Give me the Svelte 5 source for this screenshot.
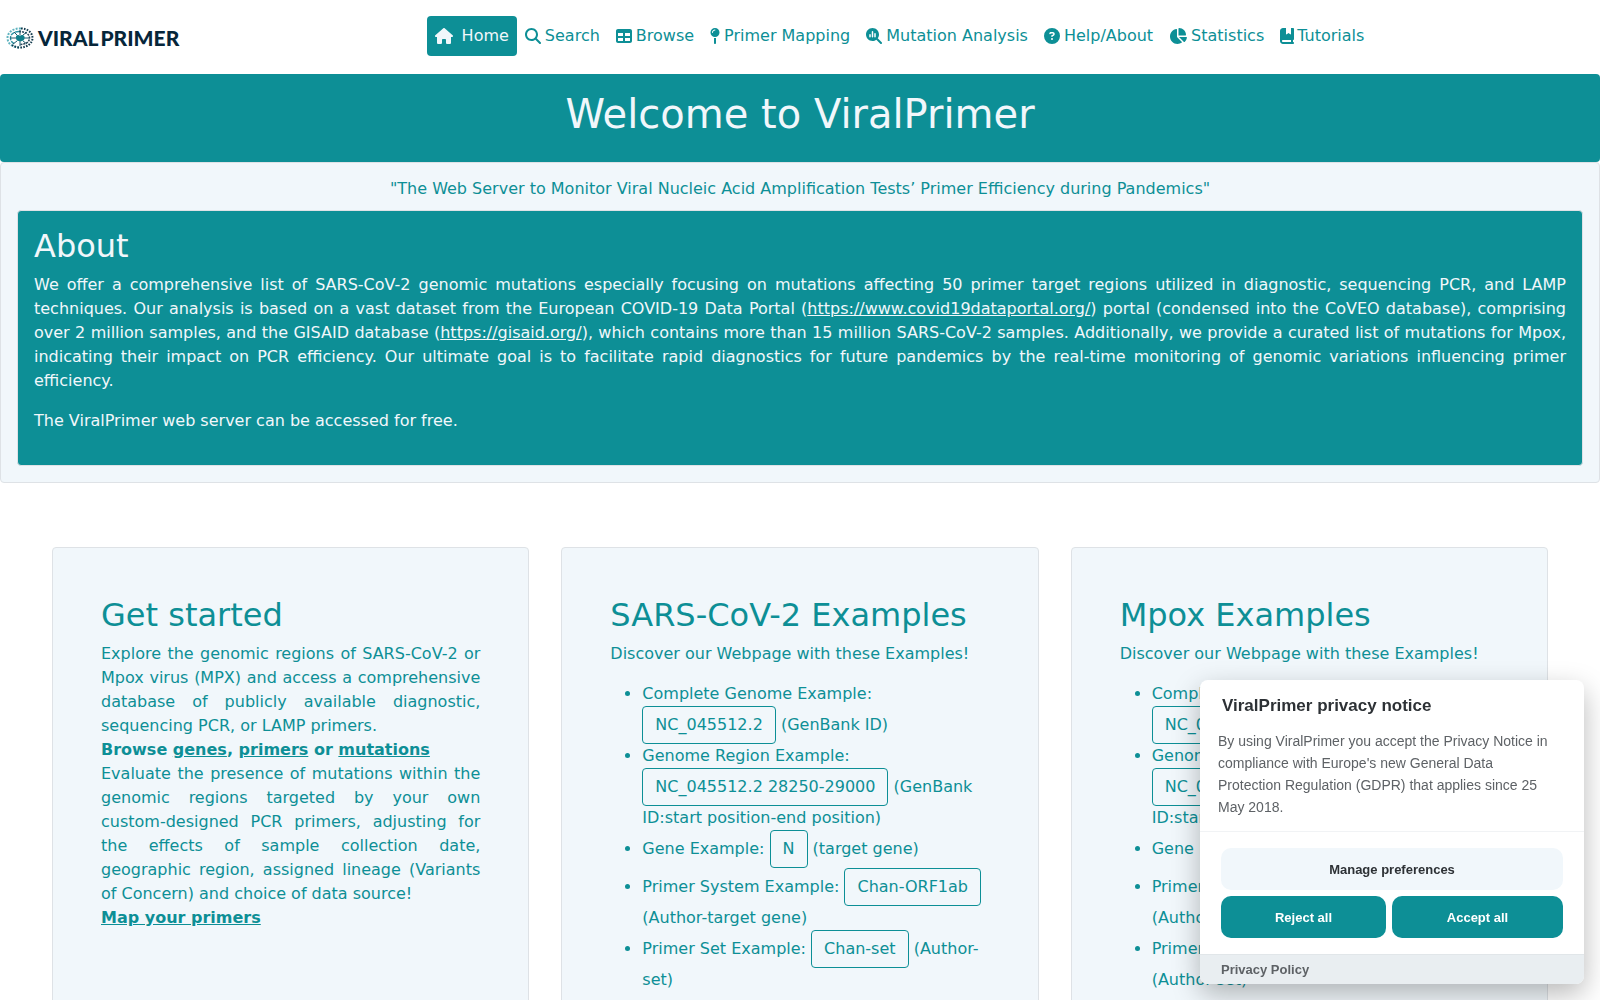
<script>
  const house = 'M575.8 255.5c0 18-15 32.1-32 32.1h-32l.7 160.2c0 2.7-.2 5.4-.5 8.1V472c0 22.1-17.9 40-40 40H392c-22.1 0-40-17.9-40-40V384c0-17.7-14.3-32-32-32H256c-17.7 0-32 14.3-32 32v88c0 22.1-17.9 40-40 40H104c-22.1 0-40-17.9-40-40V287.6H32c-18 0-32-14-32-32.1c0-9 3-17 10-24L266.4 8c7-7 15-8 22-8s15 2 21 7L564.8 231.5c8 7 12 15 11 24z';
  const lens = 'M416 208c0 45.9-14.9 88.3-40 122.7L502.6 457.4c12.5 12.5 12.5 32.8 0 45.3s-32.8 12.5-45.3 0L330.7 376c-34.4 25.2-76.8 40-122.7 40C93.1 416 0 322.9 0 208S93.1 0 208 0S416 93.1 416 208z';

  const links = [
    { label: 'Home', width: 18, path: house, active: true },
    { label: 'Search', width: 16, path: lens + 'M208 352a144 144 0 1 0 0-288 144 144 0 1 0 0 288z' },
    { label: 'Browse', width: 16, path: 'M64 256V160H224v96H64zm0 64H224v96H64V320zm224 96V320H448v96H288zM448 256H288V160H448v96zM64 32C28.7 32 0 60.7 0 96V416c0 35.3 28.7 64 64 64H448c35.3 0 64-28.7 64-64V96c0-35.3-28.7-64-64-64H64z' },
    { label: 'Primer Mapping', width: 10, path: 'M16 144a144 144 0 1 1 288 0A144 144 0 1 1 16 144zM160 80c8.8 0 16-7.2 16-16s-7.2-16-16-16c-53 0-96 43-96 96c0 8.8 7.2 16 16 16s16-7.2 16-16c0-35.3 28.7-64 64-64zM128 480V317.1c10.4 1.9 21.1 2.9 32 2.9s21.6-1 32-2.9V480c0 17.7-14.3 32-32 32s-32-14.3-32-32z' },
    { label: 'Mutation Analysis', width: 16, path: lens + 'M104 216v64c0 13.3 10.7 24 24 24s24-10.7 24-24V216c0-13.3-10.7-24-24-24s-24 10.7-24 24zm80-96V280c0 13.3 10.7 24 24 24s24-10.7 24-24V120c0-13.3-10.7-24-24-24s-24 10.7-24 24zm80 64v96c0 13.3 10.7 24 24 24s24-10.7 24-24V184c0-13.3-10.7-24-24-24s-24 10.7-24 24z' },
    { label: 'Help/About', width: 16, path: 'M256 512A256 256 0 1 0 256 0a256 256 0 1 0 0 512zM169.8 165.3c7.9-22.3 29.1-37.3 52.8-37.3h58.3c34.9 0 63.1 28.3 63.1 63.1c0 22.6-12.1 43.5-31.7 54.8L280 264.4c-.2 13-10.9 23.6-24 23.6c-13.3 0-24-10.7-24-24V250.5c0-8.6 4.6-16.5 12.1-20.8l44.3-25.4c4.7-2.7 7.6-7.7 7.6-13.1c0-8.4-6.8-15.1-15.1-15.1H222.6c-3.4 0-6.4 2.1-7.5 5.3l-.4 1.2c-4.4 12.5-18.2 19-30.6 14.6s-19-18.2-14.6-30.6l.4-1.2zM224 352a32 32 0 1 1 64 0 32 32 0 1 1-64 0z' },
    { label: 'Statistics', width: 18, path: 'M304 240V16.6c0-9 7-16.6 16-16.6C443.7 0 544 100.3 544 224c0 9-7.6 16-16.6 16H304zM32 272C32 150.7 122.1 50.3 239 34.3c9.2-1.3 17 6.1 17 15.4V288L412.5 444.5c6.7 6.7 6.2 17.7-1.5 23.1C371.8 495.6 323.8 512 272 512C139.5 512 32 404.6 32 272zm526.4 16c9.3 0 16.6 7.8 15.4 17c-7.7 55.9-34.6 105.6-73.9 142.3c-6 5.6-15.4 5.2-21.2-.7L320 288H558.4z' },
    { label: 'Tutorials', width: 14, tight: true, path: 'M0 96C0 43 43 0 96 0h96V190.7c0 13.4 15.5 20.9 26 12.5L272 160l54 43.2c10.5 8.4 26 .9 26-12.5V0h64c17.7 0 32 14.3 32 32V352c0 17.7-14.3 32-32 32v64c17.7 0 32 14.3 32 32s-14.3 32-32 32H96c-53 0-96-43-96-96V96zM64 416c0 17.7 14.3 32 32 32H352V384H96c-17.7 0-32 14.3-32 32z' },
  ];

  const examples = [
    {
      title: 'SARS-CoV-2 Examples',
      rows: [
        ['Complete Genome Example:', 'NC_045512.2', '(GenBank ID)'],
        ['Genome Region Example:', 'NC_045512.2 28250-29000', '(GenBank ID:start position-end position)'],
        ['Gene Example:', 'N', '(target gene)'],
        ['Primer System Example:', 'Chan-ORF1ab', '(Author-target gene)'],
        ['Primer Set Example:', 'Chan-set', '(Author-set)'],
      ],
    },
    {
      title: 'Mpox Examples',
      rows: [
        ['Complete Genome Example:', 'NC_063383.1', '(GenBank ID)'],
        ['Genome Region Example:', 'NC_063383.1 28250-29000', '(GenBank ID:start position-end position)'],
        ['Gene Example:', 'B6R', '(target gene)'],
        ['Primer System Example:', 'Scaramozzino', '(Author-target gene)'],
        ['Primer Set Example:', 'Scaramozzino-set', '(Author-set)'],
      ],
    },
  ];
</script>

<header>
  <a class="brand" href="#home" aria-label="ViralPrimer home">
    <svg class="virus" viewBox="0 0 28 22" aria-hidden="true">
      <g fill="none">
        <path d="M15 1.500C7 1 1.500 5.500 1.500 11s5 9.500 12.500 9.500" stroke="#5fb3bf" stroke-width="2" stroke-dasharray="2 1.300" />
        <path d="M15 1.500c7 0 11.500 4.500 11.500 9.500s-5 9.500-12.500 9.500c-3 0-6-1-8-2.500" stroke="#123a4d" stroke-width="2" stroke-dasharray="1.600 1.300" />
        <path d="M13 4.500C8 4.500 4.500 7 4.500 11c0 3 2 5 4.500 6" stroke="#2b93a3" stroke-width="1.400" stroke-dasharray="4 1" />
        <path d="M13 4.500c6 0 10.500 2.500 10.500 6.500s-4 6.500-9.500 6.500" stroke="#2a4759" stroke-width="1.600" stroke-dasharray="2 1" />
        <path d="M17 8l4-3M18 11h6M17 14l4 3M14 14v5M11 14l-4 3M10 11H4M11 8L8 5M14 8V3" stroke="#1f5b6d" />
      </g>
      <path d="M10 9.500c1-2 3-1.500 4-.8c1-1 4-1 4.500 1s-.5 4-2.500 4.300c-1.500.5-2 .3-3 0c-2 .3-3.500-2-3-4.500z" fill="#0f7f8b" />
    </svg>
    <span class="wordmark"><span>VIRAL</span><span>PRIMER</span></span>
  </a>
  <nav>
    {#each links as link}
      <a href="#{link.label}" class:active={link.active} class:tight={link.tight}>
        <svg width={link.width} height="16" viewBox="0 0 {link.width * 32} 512" aria-hidden="true">
          <path fill="currentColor" fill-rule="evenodd" d={link.path} />
        </svg>
        <span>{link.label}</span>
      </a>
    {/each}
  </nav>
</header>

<main>
  <div class="banner"><h1>Welcome to ViralPrimer</h1></div>
  <section class="intro">
    <p class="quote">"The Web Server to Monitor Viral Nucleic Acid Amplification Tests’ Primer Efficiency during Pandemics"</p>
    <div class="about">
      <h2>About</h2>
      <p>
        We offer a comprehensive list of SARS-CoV-2 genomic mutations especially focusing on mutations affecting 50
        primer target regions utilized in diagnostic, sequencing PCR, and LAMP techniques. Our analysis is based on a
        vast dataset from the European COVID-19 Data Portal (<a href="#portal">https://www.covid19dataportal.org/</a>)
        portal (condensed into the CoVEO database), comprising over 2 million samples, and the GISAID database
        (<a href="#gisaid">https://gisaid.org/</a>), which contains more than 15 million SARS-CoV-2 samples.
        Additionally, we provide a curated list of mutations for Mpox, indicating their impact on PCR efficiency. Our
        ultimate goal is to facilitate rapid diagnostics for future pandemics by the real-time monitoring of genomic
        variations influencing primer efficiency.
      </p>
      <p>The ViralPrimer web server can be accessed for free.</p>
    </div>
  </section>

  <div class="cards">
    <section class="card">
      <h2>Get started</h2>
      <div class="justified">
        Explore the genomic regions of SARS-CoV-2 or Mpox virus (MPX) and access a comprehensive database of publicly
        available diagnostic, sequencing PCR, or LAMP primers.
      </div>
      <strong>Browse <a href="#genes">genes</a>, <a href="#primers">primers</a> or <a href="#mutations">mutations</a></strong>
      <div class="justified">
        Evaluate the presence of mutations within the genomic regions targeted by your own custom-designed PCR
        primers, adjusting for the effects of sample collection date, geographic region, assigned lineage (Variants of
        Concern) and choice of data source!
      </div>
      <strong><a href="#map">Map your primers</a></strong>
    </section>
    {#each examples as card}
      <section class="card">
        <h2>{card.title}</h2>
        <p>Discover our Webpage with these Examples!</p>
        <ul>
          {#each card.rows as [label, value, hint]}
            <li>{label} <button type="button">{value}</button> {hint}</li>
          {/each}
        </ul>
      </section>
    {/each}
  </div>
</main>

<aside class="notice" role="dialog" aria-labelledby="notice-title">
  <div class="message">
    <h2 id="notice-title">ViralPrimer privacy notice</h2>
    <p>
      By using ViralPrimer you accept the Privacy Notice in compliance with Europe's new General Data Protection
      Regulation (GDPR) that applies since 25 May 2018.
    </p>
  </div>
  <div class="actions">
    <button type="button" class="manage">Manage preferences</button>
    <button type="button">Reject all</button>
    <button type="button">Accept all</button>
  </div>
  <footer><a href="#privacy">Privacy Policy</a></footer>
</aside>

<style>
  :global(body) {
    background: #fff;
    color: #0d8f96;
    font: 16px/24px 'DejaVu Sans', sans-serif;
  }
  :global(*) {
    box-sizing: border-box;
  }
  a {
    color: inherit;
  }
  h1, h2, p, ul {
    margin: 0;
  }
  h1, h2 {
    font-weight: 400;
  }
  h1 {
    font-size: 40px;
    line-height: 48px;
  }
  h2 {
    font-size: 32px;
    line-height: 38px;
    margin-bottom: 8px;
  }

  header {
    display: flex;
    align-items: center;
    padding: 16px 0 18px;
  }
  .brand {
    display: flex;
    align-items: center;
    gap: 4px;
    width: 199px;
    padding: 4px 0 0 6px;
    color: #06263a;
    text-decoration: none;
  }
  .virus {
    width: 28px;
    height: 22px;
  }
  .wordmark {
    display: flex;
    gap: 2px;
    font: 900 21px/24px Lato, sans-serif;
  }
  nav {
    display: flex;
    flex: 1;
    justify-content: center;
  }
  nav a {
    display: flex;
    align-items: center;
    gap: 4px;
    padding: 8px;
    border-radius: 4px;
    text-decoration: none;
    white-space: nowrap;
  }
  nav svg {
    flex: none;
  }
  nav .active {
    gap: 9px;
    background: #0d8f96;
    color: #f1f7fb;
  }
  nav .tight {
    gap: 3px;
  }

  .banner {
    padding: 16px 16px 24px;
    border-radius: 4px;
    background: #0d8f96;
    color: #f1f7fb;
    text-align: center;
  }
  .intro {
    padding: 14px 16px 16px;
    border: 1px solid #dee2e6;
    border-radius: 4px;
    background: #f1f7fb;
  }
  .quote {
    margin-bottom: 9px;
    text-align: center;
  }
  .about {
    padding: 16px;
    border: 1px solid #dee2e6;
    border-radius: 4px;
    background: #0d8f96;
    color: #f1f7fb;
    text-align: justify;
  }
  .about p {
    margin-bottom: 16px;
  }

  .cards {
    display: grid;
    grid-template-columns: repeat(3, 1fr);
    gap: 32px;
    padding: 64px 52px;
  }
  .card {
    padding: 48px;
    border: 1px solid #dee2e6;
    border-radius: 4px;
    background: #f1f7fb;
  }
  .justified {
    text-align: justify;
  }
  .card strong {
    display: block;
  }
  ul {
    margin-top: 16px;
    padding-left: 32px;
  }
  li button {
    padding: 6px 12px;
    border: 1px solid #0d8f96;
    border-radius: 4px;
    background: transparent;
    color: inherit;
    font: inherit;
  }

  .notice {
    position: fixed;
    right: 16px;
    bottom: 16px;
    width: 384px;
    overflow: hidden;
    border-radius: 8px;
    background: #fff;
    box-shadow: 0 10px 28px rgba(2, 2, 3, 0.28);
    color: #5e6266;
    font: 14px/22px 'Liberation Sans', sans-serif;
  }
  .message {
    padding: 16px 30px 13px 18px;
    border-bottom: 1px solid #f1f3f5;
  }
  .notice h2 {
    margin: 0 0 14px 4px;
    color: #2d3135;
    font-size: 17px;
    font-weight: 700;
    line-height: 20px;
  }
  .actions {
    display: grid;
    grid-template-columns: 165px 1fr;
    gap: 6px;
    padding: 16px 21px;
  }
  .actions button {
    height: 42px;
    border: 0;
    border-radius: 10px;
    background: #0d8f96;
    color: #fff;
    font: 700 13px 'Liberation Sans', sans-serif;
  }
  .actions .manage {
    grid-column: 1 / -1;
    background: #f1f7fb;
    color: #2d3135;
  }
  footer {
    padding: 4px 21px;
    border-top: 1px solid #e1e6e9;
    background: #e9eef1;
    font-size: 13px;
    font-weight: 700;
    line-height: 21px;
  }
  footer a {
    text-decoration: none;
  }
</style>
